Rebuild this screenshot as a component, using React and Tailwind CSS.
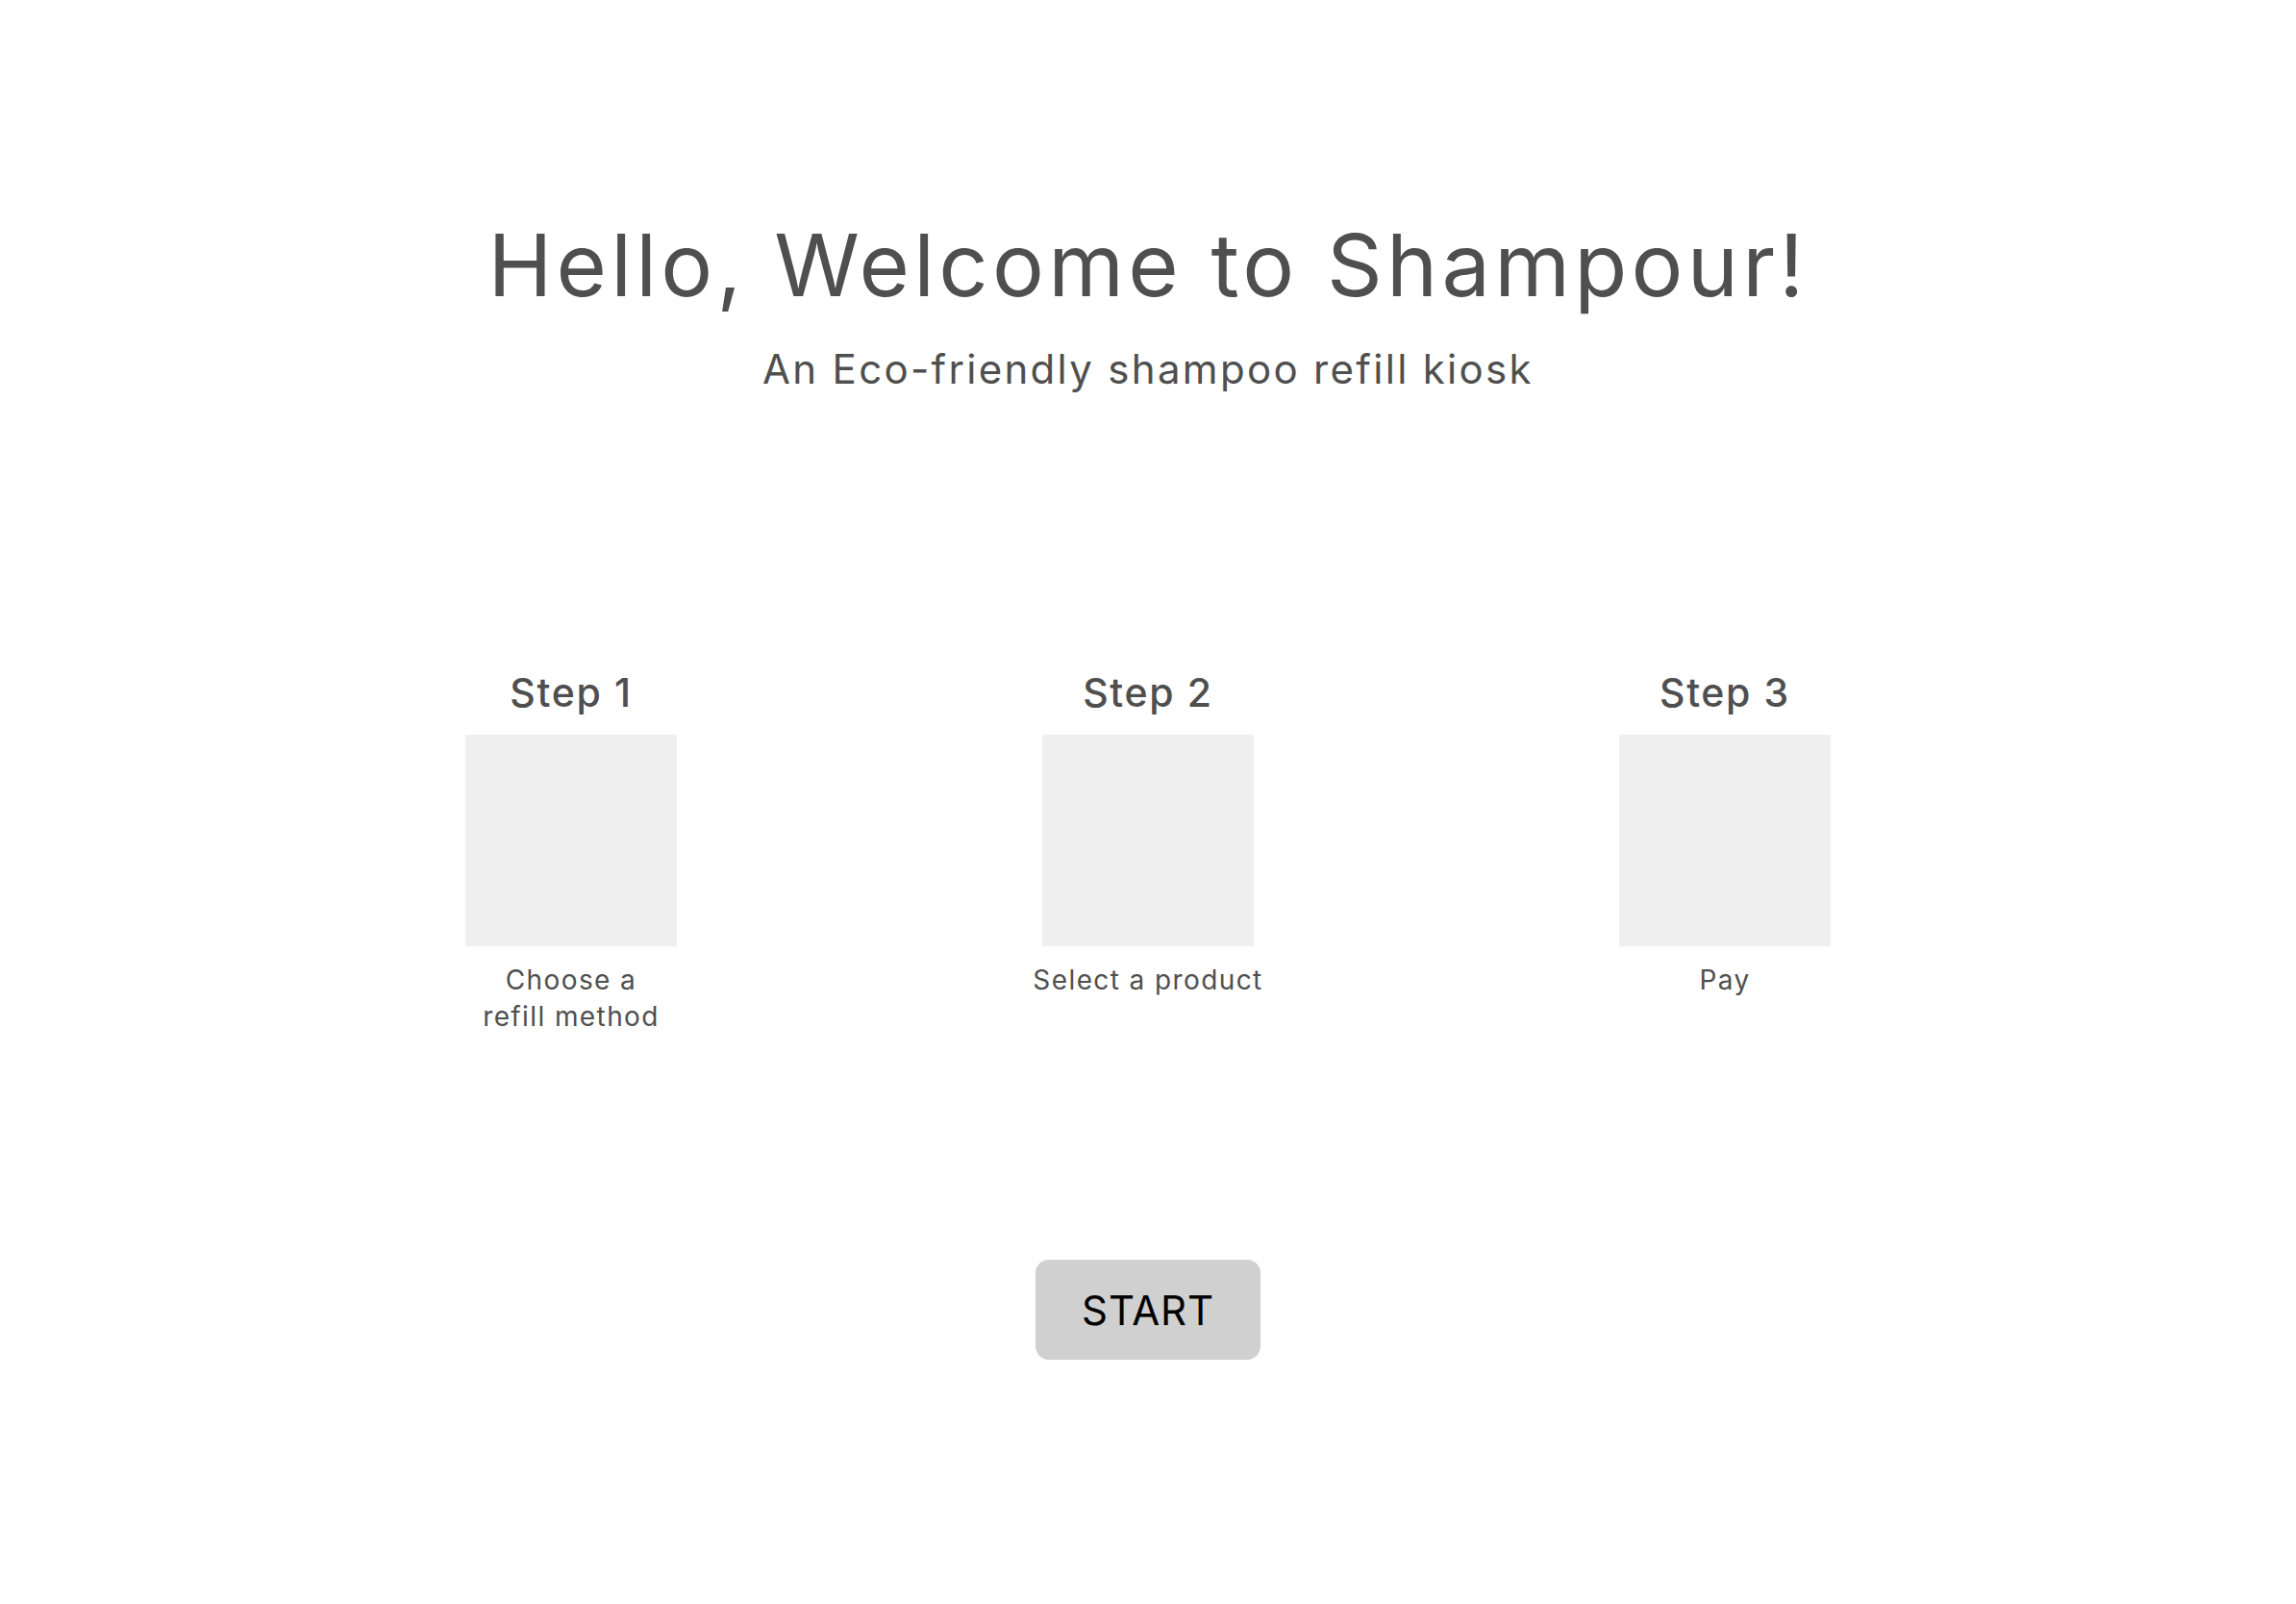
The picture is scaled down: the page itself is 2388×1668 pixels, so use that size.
import React from 'react';

const steps = [
  { title: 'Step 1', label: ['Choose a', 'refill method'] },
  { title: 'Step 2', label: ['Select a product'] },
  { title: 'Step 3', label: ['Pay'] },
];

const Welcome = () => {
  return (
    <div className="min-h-screen w-full bg-white text-[#4f4f4f]" style={{ fontFamily: 'Inter, "Open Sans", sans-serif' }}>
      <div className="flex flex-col items-center pt-[231px]">
        <h1 className="text-[90px] leading-none tracking-[0.047em]">Hello, Welcome to Shampour!</h1>
        <p className="mt-[42px] text-[42px] leading-none tracking-[0.055em]">An Eco-friendly shampoo refill kiosk</p>
      </div>

      <div className="mt-[295px] flex justify-center gap-[380px]">
        {steps.map((s) => (
          <div key={s.title} className="flex w-[220px] flex-col items-center">
            <h2 className="text-[41px] font-medium leading-none tracking-[0.04em]">{s.title}</h2>
            <div className="mt-[23px] h-[220px] w-[220px] bg-[#efefef]"></div>
            <div className="mt-[16px] whitespace-nowrap text-center text-[28px] leading-[38px] tracking-[0.05em]">
              {s.label.map((l) => (
                <div key={l}>{l}</div>
              ))}
            </div>
          </div>
        ))}
      </div>

      <div className="mt-[234px] flex justify-center">
        <button className="h-[104px] w-[234px] rounded-[14px] bg-[#d0d0d0] text-[42px] tracking-[0.02em] text-black">START</button>
      </div>
    </div>
  );
};

export default Welcome;
